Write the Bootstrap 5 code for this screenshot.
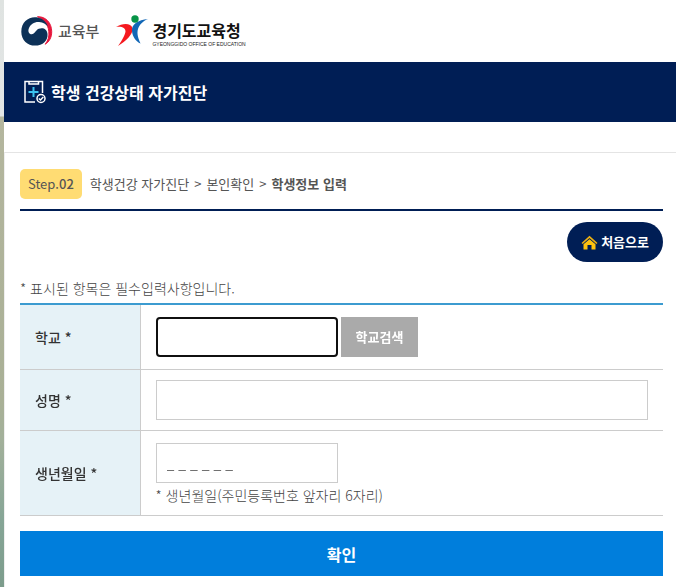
<!DOCTYPE html>
<html lang="ko">
<head>
<meta charset="utf-8">
<meta name="viewport" content="width=device-width, initial-scale=1">
<title>학생 건강상태 자가진단</title>
<link href="https://cdn.jsdelivr.net/npm/bootstrap@5.3.0/dist/css/bootstrap.min.css" rel="stylesheet">
<style>
  :root { --navy: #001e55; --line: #ccc; --ink: #333; --soft: #555; }
  body {
    min-height: 100vh; padding-left: 4px; font-family: "Noto Sans CJK KR", sans-serif;
    font-size: 14px; line-height: 20px; color: var(--soft);
    background: linear-gradient(#dfe3e1 0, #e3e6e6 116px, #b4b69e 117px, #a9b096 400px, #a2b09a 440px, #86a596 520px, #7c9c8c 100%);
  }
  .page { min-height: 100vh; background: #fff; }
  .brand-bar { height: 62px; padding: 0 16px; gap: 17px; }
  .brand { gap: 5px; color: #555; font-size: 15px; font-weight: 500; }
  .edu-text { padding-top: 3px; }
  .edu-name { color: #111; font-size: 16px; line-height: 22px; font-weight: 700; }
  .edu-sub { color: #222; font-family: "Liberation Sans", sans-serif; font-size: 5px; line-height: 6px; }
  .title-bar { height: 60px; padding: 0 19px; gap: 4px; background: var(--navy); }
  .title-bar h1 { font-size: 16px; line-height: 24px; font-weight: 700; }
  .sheet { margin-top: 30px; padding: 16px 13px 11px 15px; border-top: 1px solid #e4e4e4; border-left: 1px solid #eee; }
  .steps { padding-bottom: 10px; gap: 8px; border-bottom: 2px solid var(--navy); font-size: 13px; }
  .step-tag { padding: 5px 8px; border-radius: 5px; background: #ffdc73; }
  .path { gap: 5px; }
  .home-row { padding-top: 11px; }
  .home-btn { height: 40px; padding: 0 14px; gap: 3px; border-radius: 20px; background: var(--navy); font-size: 13px; font-weight: 700; }
  .home-btn:hover { background: #0a2d70; }
  .hint { color: #444; font-weight: 300; }
  .form-hint { margin: 16px 0 5px; }
  .form-table { border-top: 2px solid #3c9bd0; }
  .form-table th { width: 120px; padding: 0 15px; background: #e6f2f7; border-right: 1px solid var(--line); color: var(--ink); font-weight: 500; }
  .form-table td { padding: 10px 15px; }
  .form-table tr { border-bottom: 1px solid var(--line); }
  .form-table .roomy { padding: 12px 15px; }
  .form-table .noted { padding: 12px 15px 10px; }
  .field { height: 40px; padding: 0 10px; border: 1px solid var(--line); border-radius: 0; background: #fff; color: var(--soft); }
  .field::placeholder { color: var(--soft); opacity: 1; }
  .field:focus { outline: none; box-shadow: none; border: 2px solid #101010; border-radius: 4px; }
  .short { width: 182px; }
  .school-row { gap: 3px; }
  .birth-hint { margin-top: 2px; }
  .search-btn { height: 40px; padding: 0 15px; border-radius: 0; background: #aaa; font-size: 13px; font-weight: 700; }
  .submit-btn { height: 45px; margin-top: 15px; border-radius: 0; background: #007edc; font-size: 16px; font-weight: 700; }
</style>
<script src="https://cdn.jsdelivr.net/npm/bootstrap@5.3.0/dist/js/bootstrap.bundle.min.js"></script>
</head>
<body>
<div class="page">
  <header>
    <div class="brand-bar d-flex align-items-center">
      <div class="brand d-flex align-items-center">
        <svg width="33" height="32" viewBox="3 5 102 96" aria-hidden="true">
          <path d="M57 9C82 7 101 28 101 55C101 74 93 86 81 94C90 82 94 70 92 54C90 32 76 16 57 9Z" fill="#e6173c" stroke="#e6173c" stroke-width="3"/>
          <path d="M60 12C35 5 7 22 7 55C7 82 27 98 49 98C74 98 90 82 88 62C87 46 73 41 61 46C51 50 49 63 39 63C31 63 27 55 30 46C35 31 48 24 62 25C75 26 83 31 90 40C84 24 74 15 60 12Z" fill="#0d3157"/>
        </svg>
        <span>교육부</span>
      </div>
      <div class="d-flex align-items-center gap-1">
        <svg width="32" height="32" viewBox="0 0 32 32" aria-hidden="true">
          <path d="M0 12C7 7.500 15 8 16.500 13C17.500 19 10 26 2 31C6 25.500 9 20 9.500 16.500C9.500 13 6 11 0 12Z" fill="#f5191f"/>
          <path d="M32 4C22 5 15.500 9 16 16C16.500 22 20 26.500 24.500 28.500C22.500 24 20.500 19 22 14C23.200 10 27 6 32 4Z" fill="#1267b6"/>
          <circle cx="19" cy="4" r="3.700" fill="#079447"/>
        </svg>
        <div class="edu-text d-flex flex-column">
          <span class="edu-name">경기도교육청</span>
          <span class="edu-sub">GYEONGGIDO OFFICE OF EDUCATION</span>
        </div>
      </div>
    </div>
    <div class="title-bar d-flex align-items-center text-white">
      <svg width="24" height="24" viewBox="0 0 24 24" fill="none" stroke="#fff" stroke-width="1.500" aria-hidden="true">
        <path d="M12 22H2V1.500H19.500V13"/>
        <path d="M6 1.500V4H15.500V1.500"/>
        <path d="M10.500 7V17M5.500 12H15.500" stroke="#3cc3f0" stroke-width="2"/>
        <circle cx="18" cy="18.500" r="4"/>
        <path d="M15.800 18.500L17.500 20L20.300 17"/>
      </svg>
      <h1 class="m-0">학생 건강상태 자가진단</h1>
    </div>
  </header>
  <main class="sheet">
    <div class="steps d-flex align-items-center">
      <span class="step-tag">Step.<span class="fw-medium">02</span></span>
      <div class="path d-flex">
        <span>학생건강 자가진단</span><span>&gt;</span><span>본인확인</span><span>&gt;</span><strong>학생정보 입력</strong>
      </div>
    </div>
    <div class="home-row d-flex justify-content-end">
      <button type="button" class="home-btn btn text-white d-flex align-items-center border-0">
        <svg width="17" height="15" viewBox="0 0 17 15" aria-hidden="true">
          <path d="M0.500 8L8.500 0.800L16.500 8L15.300 9L8.500 3L1.700 9Z" fill="#eeb111"/>
          <path d="M2.500 9.300L8.500 4.200L14.500 9.300V14.500H10.500V10H6.500V14.500H2.500Z" fill="#ffc20e"/>
        </svg>
        처음으로
      </button>
    </div>
    <form>
      <p class="hint form-hint">* 표시된 항목은 필수입력사항입니다.</p>
      <table class="form-table w-100">
        <tbody>
          <tr>
            <th scope="row"><label for="school">학교 *</label></th>
            <td class="roomy">
              <div class="school-row d-flex">
                <input id="school" type="text" class="field short" autofocus>
                <button type="button" class="search-btn btn text-white border-0">학교검색</button>
              </div>
            </td>
          </tr>
          <tr>
            <th scope="row"><label for="fullname">성명 *</label></th>
            <td><input id="fullname" type="text" class="field w-100 d-block"></td>
          </tr>
          <tr>
            <th scope="row"><label for="birth">생년월일 *</label></th>
            <td class="noted">
              <input id="birth" type="text" class="field short d-block" placeholder="_ _ _ _ _ _" maxlength="6" inputmode="numeric">
              <div class="hint birth-hint">* 생년월일(주민등록번호 앞자리 6자리)</div>
            </td>
          </tr>
        </tbody>
      </table>
      <button type="submit" class="submit-btn btn w-100 text-white border-0">확인</button>
    </form>
  </main>
</div>
</body>
</html>
